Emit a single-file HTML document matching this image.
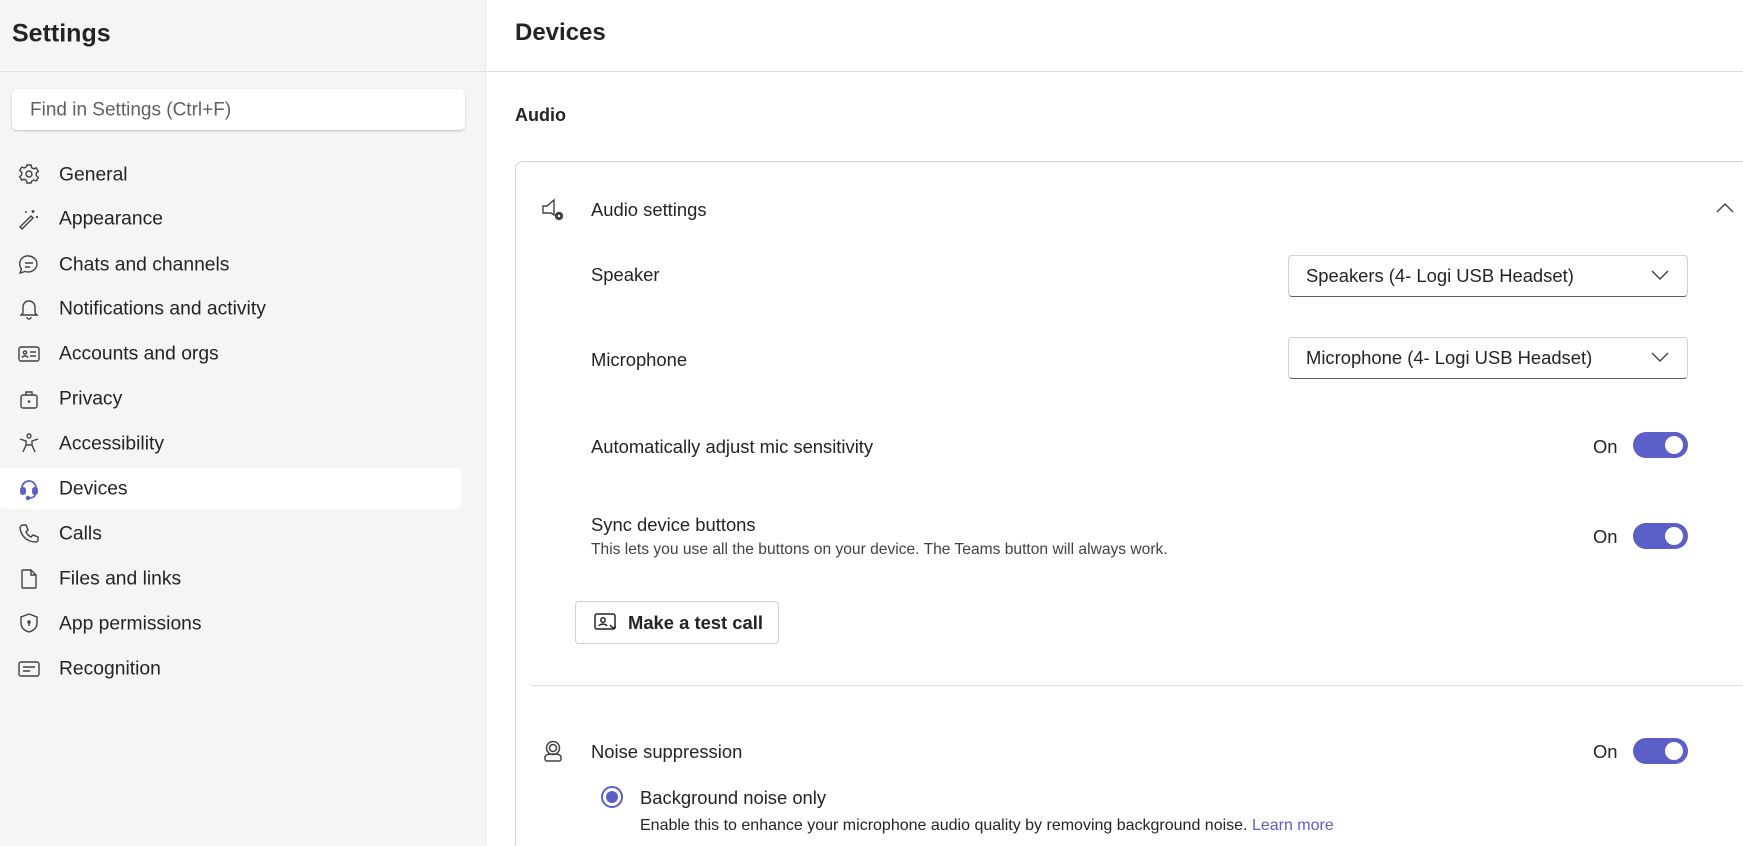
<!DOCTYPE html>
<html style="width:1743px;height:846px;overflow:hidden"><head><meta charset="utf-8"><style>
*{box-sizing:border-box;margin:0;padding:0}
body{width:1743px;height:846px;overflow:hidden;background:#fff;font-family:"Liberation Sans",sans-serif;color:#242424;position:relative}
.abs{position:absolute}
.side{left:0;top:0;width:486px;height:846px;background:#f5f5f5;border-right:1px solid #e6e6e6}
.t{position:absolute;white-space:nowrap;line-height:1;transform:translateY(-50%)}
.nav{position:absolute;left:59px;font-size:19.3px;color:#242424}
.ic{position:absolute;left:17px;width:24px;height:24px;fill:none;stroke:#424242;stroke-width:1.4}
.tog{position:absolute;left:1633px;width:55px;height:26px;border-radius:13px;background:#5b5fc7}
.tog::after{content:"";position:absolute;right:5px;top:4px;width:18px;height:18px;border-radius:50%;background:#fff}
.on{position:absolute;left:1593px;font-size:18.4px}
.m{font-size:18.4px}
.dd{position:absolute;left:1288px;width:400px;height:42px;border:1px solid #d1d1d1;border-bottom-color:#616161;border-radius:4px;font-size:18.4px;padding-left:17px;line-height:40px}
.dd svg{position:absolute;right:18px;top:13px}
</style></head><body>
<div class="abs side"></div>
<div class="abs" style="left:0;top:71px;width:486px;height:1px;background:#e0e0e0"></div>
<div class="t" style="left:12px;top:34px;font-size:25px;font-weight:bold">Settings</div>
<div class="abs" style="left:12px;top:89px;width:453px;height:41px;background:#fff;border-radius:5px;box-shadow:0 1px 2px rgba(0,0,0,.2)"></div>
<div class="t" style="left:30px;top:110px;font-size:19px;color:#616161">Find in Settings (Ctrl+F)</div>
<div class="abs" style="left:0;top:468px;width:461px;height:41px;background:#fff;border-radius:4px"></div>

<svg class="ic" style="top:162px" viewBox="0 0 24 24"><circle cx="12" cy="12" r="3"/><path d="M10 3h4l.6 2.6 2.2 1.2 2.5-.9 2 3.4-2 1.8v2.6l2 1.8-2 3.4-2.5-.9-2.2 1.2L14 21h-4l-.6-2.6-2.2-1.2-2.5.9-2-3.4 2-1.8v-2.6l-2-1.8 2-3.4 2.5.9 2.2-1.2z"/></svg>
<div class="t nav" style="top:175px">General</div>
<svg class="ic" style="top:207px" viewBox="0 0 24 24"><path d="M3 20L14 9l2 2L5 22zM16 3v3M14.5 4.5h3M20 9v2M19 10h2M9 4v2"/></svg>
<div class="t nav" style="top:219px">Appearance</div>
<svg class="ic" style="top:253px" viewBox="0 0 24 24"><path d="M12 3a9 8 0 1 1-4 15.5L3 20l1.5-4A8 8 0 0 1 12 3zM8 10h8M8 14h5"/></svg>
<div class="t nav" style="top:265px">Chats and channels</div>
<svg class="ic" style="top:297px" viewBox="0 0 24 24"><path d="M6 16V10a6 6 0 0 1 12 0v6l2 2H4zM10 20a2 2 0 0 0 4 0"/></svg>
<div class="t nav" style="top:309px">Notifications and activity</div>
<svg class="ic" style="top:342px" viewBox="0 0 24 24"><rect x="2" y="5" width="20" height="14" rx="2"/><circle cx="8" cy="10.5" r="1.6"/><path d="M5 15.5c1-2 5-2 6 0M13 10h6M13 14h6"/></svg>
<div class="t nav" style="top:354px">Accounts and orgs</div>
<svg class="ic" style="top:387px" viewBox="0 0 24 24"><rect x="4" y="8" width="16" height="13" rx="2"/><path d="M9 8V5h6v3"/><circle cx="12" cy="14.5" r=".6" fill="#424242"/></svg>
<div class="t nav" style="top:399px">Privacy</div>
<svg class="ic" style="top:431px" viewBox="0 0 24 24"><circle cx="12" cy="5" r="2"/><path d="M3 8l6 2v4l-3 7M21 8l-6 2v4l3 7M9 14h6"/></svg>
<div class="t nav" style="top:444px">Accessibility</div>
<svg class="ic" style="top:477px;stroke:#5b5fc7;stroke-width:1.8" viewBox="0 0 24 24"><path d="M5 14v-3a7 7 0 0 1 14 0v3"/><rect x="4" y="11" width="4" height="6" rx="1.5" fill="#5b5fc7"/><rect x="16" y="11" width="4" height="6" rx="1.5" fill="#5b5fc7"/><path d="M18 17c0 3-3 4-6 4"/><circle cx="11" cy="21" r="1.3" fill="#5b5fc7"/></svg>
<div class="t nav" style="top:489px">Devices</div>
<svg class="ic" style="top:522px" viewBox="0 0 24 24"><path d="M6 3l3 0 2 5-2 2c1 2 3 4 5 5l2-2 5 2v3c0 1-1 2-2 2C10 20 4 14 3 6c0-1 1-3 3-3z"/></svg>
<div class="t nav" style="top:534px">Calls</div>
<svg class="ic" style="top:567px" viewBox="0 0 24 24"><path d="M6 3h8l5 5v12a1 1 0 0 1-1 1H6a1 1 0 0 1-1-1V4a1 1 0 0 1 1-1zM14 3v5h5"/></svg>
<div class="t nav" style="top:579px">Files and links</div>
<svg class="ic" style="top:611px" viewBox="0 0 24 24"><path d="M12 3l8 3v6c0 5-4 8-8 9-4-1-8-4-8-9V6z"/><circle cx="12" cy="11" r="1" fill="#424242"/><path d="M12 12v3"/></svg>
<div class="t nav" style="top:624px">App permissions</div>
<svg class="ic" style="top:657px" viewBox="0 0 24 24"><rect x="2" y="5" width="20" height="14" rx="2"/><path d="M6 10h12M6 14h7"/></svg>
<div class="t nav" style="top:669px">Recognition</div>

<div class="t" style="left:515px;top:33px;font-size:24px;font-weight:bold">Devices</div>
<div class="abs" style="left:486px;top:71px;width:1257px;height:1px;background:#e0e0e0"></div>
<div class="t" style="left:515px;top:115px;font-size:18px;font-weight:bold">Audio</div>
<div class="abs" style="left:515px;top:161px;width:1260px;height:685px;border:1px solid #d1d1d1;border-bottom:none;border-radius:8px 8px 0 0"></div>

<svg class="abs" style="left:540px;top:197px" width="26" height="26" viewBox="0 0 26 26" fill="none" stroke="#424242" stroke-width="1.4"><path d="M3 9h4l7-6v15l-3-2H3z"/><circle cx="19" cy="19" r="3.5" fill="#424242"/><circle cx="19" cy="19" r="1.2" fill="#fff" stroke="none"/></svg>
<div class="t m" style="left:591px;top:210px">Audio settings</div>
<svg class="abs" style="left:1716px;top:202px" width="18" height="12" viewBox="0 0 18 12" fill="none" stroke="#424242" stroke-width="1.4"><path d="M1 10l8-8 8 8"/></svg>

<div class="t m" style="left:591px;top:275px">Speaker</div>
<div class="dd" style="top:255px">Speakers (4- Logi USB Headset)<svg width="18" height="12" viewBox="0 0 18 12" fill="none" stroke="#424242" stroke-width="1.4"><path d="M1 2l8 8 8-8"/></svg></div>
<div class="t m" style="left:591px;top:360px">Microphone</div>
<div class="dd" style="top:337px">Microphone (4- Logi USB Headset)<svg width="18" height="12" viewBox="0 0 18 12" fill="none" stroke="#424242" stroke-width="1.4"><path d="M1 2l8 8 8-8"/></svg></div>

<div class="t m" style="left:591px;top:447px">Automatically adjust mic sensitivity</div>
<div class="t on" style="top:447px">On</div><div class="tog" style="top:432px"></div>

<div class="t m" style="left:591px;top:525px">Sync device buttons</div>
<div class="t" style="left:591px;top:550px;font-size:15.6px;color:#424242">This lets you use all the buttons on your device. The Teams button will always work.</div>
<div class="t on" style="top:537px">On</div><div class="tog" style="top:523px"></div>

<div class="abs" style="left:575px;top:601px;width:204px;height:43px;border:1px solid #d1d1d1;border-radius:4px"></div>
<svg class="abs" style="left:594px;top:612px" width="24" height="22" viewBox="0 0 24 22" fill="none" stroke="#242424" stroke-width="1.5"><rect x="1" y="2" width="20" height="15" rx="2"/><circle cx="9" cy="8" r="2.2"/><path d="M5 14c1-2.5 7-2.5 8 0M16 13l3 3 3-1"/></svg>
<div class="t" style="left:628px;top:623px;font-size:18.4px;font-weight:bold">Make a test call</div>

<div class="abs" style="left:531px;top:685px;width:1212px;height:1px;background:#e0e0e0"></div>

<svg class="abs" style="left:540px;top:738px" width="26" height="26" viewBox="0 0 26 26" fill="none" stroke="#424242" stroke-width="1.5"><circle cx="13" cy="10" r="6.5"/><circle cx="13" cy="10" r="3.5"/><path d="M5 19c0-2 3-3 8-3s8 1 8 3v2a2 2 0 0 1-2 2H7a2 2 0 0 1-2-2z"/></svg>
<div class="t m" style="left:591px;top:752px">Noise suppression</div>
<div class="t on" style="top:752px">On</div><div class="tog" style="top:738px"></div>

<div class="abs" style="left:601px;top:786px;width:22px;height:22px;border:2px solid #5b5fc7;border-radius:50%"></div>
<div class="abs" style="left:606px;top:791px;width:12px;height:12px;background:#5b5fc7;border-radius:50%"></div>
<div class="t m" style="left:640px;top:798px">Background noise only</div>
<div class="t" style="left:640px;top:826px;font-size:16px;color:#242424">Enable this to enhance your microphone audio quality by removing background noise. <span style="color:#5b5fc7">Learn more</span></div>
</body></html>
